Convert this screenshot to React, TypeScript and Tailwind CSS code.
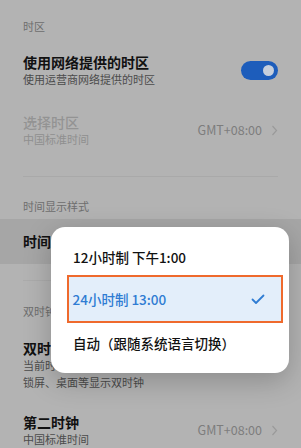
const font = { fontFamily: '"Noto Sans CJK SC", "Noto Sans", sans-serif' };

function Chevron() {
  return (
    <svg width="7" height="11" viewBox="0 0 7 11" className="shrink-0">
      <polyline points="1.5,1 5.5,5.5 1.5,10" fill="none" stroke="#9a9a9a" strokeWidth="1.2" />
    </svg>
  );
}

function Header({ text }: { text: string }) {
  return <div className="px-[23px] text-[11px] leading-[16px] text-[#6e6e6e]">{text}</div>;
}

function Row({
  title,
  sub,
  dim,
  right,
}: {
  title: string;
  sub?: string[];
  dim?: boolean;
  right?: React.ReactNode;
}) {
  return (
    <div className="flex items-center justify-between pl-[23px] pr-[23px]">
      <div>
        <div
          className={`text-[14px] leading-[18px] ${dim ? "font-medium text-[#939393]" : "font-semibold text-[#111]"}`}
        >
          {title}
        </div>
        {sub?.map((s) => (
          <div
            key={s}
            className={`text-[11px] leading-[17px] whitespace-nowrap ${dim ? "text-[#8f8f8f]" : "text-[#4b4b4b]"}`}
          >
            {s}
          </div>
        ))}
      </div>
      {right}
    </div>
  );
}

function Gmt() {
  return (
    <div className="flex items-center gap-[9px]">
      <span className="text-[12.5px] text-[#7d7d7d]">GMT+08:00</span>
      <Chevron />
    </div>
  );
}

export default function App() {
  return (
    <div className="relative h-[448px] w-[301px] overflow-hidden bg-[#b3b3b3]" style={font}>
      <div className="pt-[18px]">
        <Header text="时区" />
        <div className="mt-[19px]">
          <Row
            title="使用网络提供的时区"
            sub={["使用运营商网络提供的时区"]}
            right={
              <div className="flex h-[19px] w-[37px] items-center justify-end rounded-full bg-[#1d5dbb] pr-[4px]">
                <div className="h-[11px] w-[11px] rounded-full bg-[#c6cfdc]" />
              </div>
            }
          />
        </div>
        <div className="mt-[25px]">
          <Row title="选择时区" sub={["中国标准时间"]} dim right={<Gmt />} />
        </div>
        <div className="mx-[23px] mt-[28px] h-px bg-[#a9a9a9]" />
        <div className="mt-[21px]">
          <Header text="时间显示样式" />
        </div>
        <div className="mt-[5px] flex h-[45px] items-center bg-[#a6a6a6] px-[23px] text-[14px] font-semibold text-[#111]">
          时间
        </div>
        <div className="mx-[23px] mt-[16px] h-px bg-[#ababab]" />
        <div className="mt-[22px]">
          <Header text="双时钟" />
        </div>
        <div className="mt-[20px]">
          <Row
            title="双时钟"
            sub={["当前时区与第二时钟时区不同时，在", "锁屏、桌面等显示双时钟"]}
          />
        </div>
        <div className="mt-[22px]">
          <Row title="第二时钟" sub={["中国标准时间"]} right={<Gmt />} />
        </div>
      </div>

      {/* picker popup */}
      <div className="absolute left-[51px] top-[227px] w-[238px] rounded-[14px] bg-white pt-[18px] pb-[10px] shadow-[0_8px_28px_rgba(0,0,0,0.22)]">
        <div className="flex h-[24px] items-center pl-[22px] text-[13.5px] font-medium text-[#111]">
          12小时制 下午1:00
        </div>
        <div className="mt-[6px] ml-[16px] mr-[6px] flex h-[48px] items-center justify-between border-[2.5px] border-[#ef6a2d] bg-[#e3eefa] pl-[3.5px] pr-[16px]">
          <span className="text-[13.5px] font-medium text-[#2f7cd3]">24小时制 13:00</span>
          <svg width="14" height="11" viewBox="0 0 14 11">
            <polyline points="1.5,5.5 5,9 12.5,1.5" fill="none" stroke="#2f7cd3" strokeWidth="1.8" strokeLinecap="round" strokeLinejoin="round" />
          </svg>
        </div>
        <div className="flex h-[40px] items-center pl-[22px] text-[13.5px] font-medium text-[#111]">
          自动（跟随系统语言切换）
        </div>
      </div>
    </div>
  );
}
